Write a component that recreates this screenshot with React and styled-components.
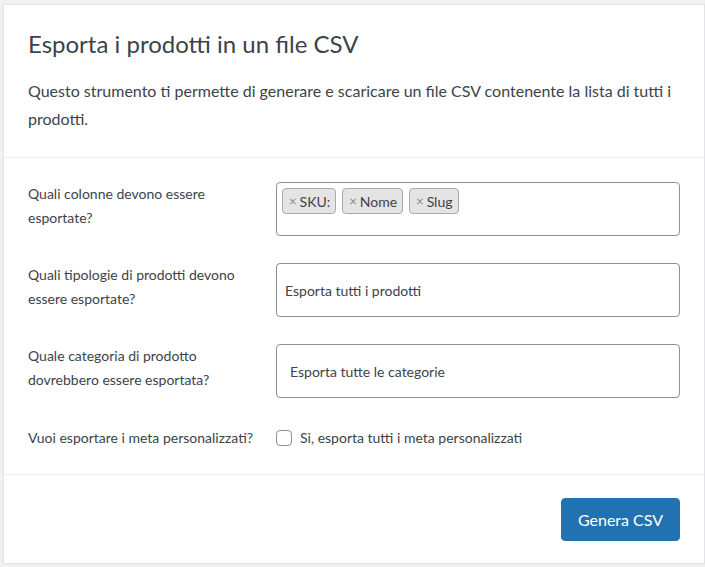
import React from "react";
import styled, { createGlobalStyle } from "styled-components";

const Global = createGlobalStyle`
  html, body { margin: 0; padding: 0; background: #f0f0f1; }
  body { font-family: Lato, "Liberation Sans", sans-serif; color: #3c434a; }
  * { box-sizing: border-box; }
`;

const Page = styled.div`
  padding: 5px 1px 4px 4px;
`;

const Card = styled.div`
  background: #fff;
  width: 700px;
  height: 558px;
  box-shadow: 0 0 0 1px #e4e4e6, 0 1px 2px rgba(0,0,0,0.05);
  display: flex;
  flex-direction: column;
`;

const Header = styled.div`
  padding: 23px 24px 24px 24px;
  border-bottom: 1px solid #ececec;
`;

const Title = styled.h2`
  margin: 0;
  font-size: 24px;
  line-height: 31px;
  font-weight: 400;
  color: #3c434a;
`;

const Intro = styled.p`
  margin: 18px 0 0;
  font-size: 16px;
  line-height: 28px;
  color: #3c434a;
`;

const Form = styled.div`
  padding: 24px 24px 23px;
  display: flex;
  flex-direction: column;
  gap: 27px;
  border-bottom: 1px solid #ececec;
`;

const Row = styled.div`
  display: grid;
  grid-template-columns: 240px 1fr;
  gap: 8px;
  align-items: ${(p) => (p.$center ? "center" : "start")};
`;

const Label = styled.label`
  font-size: 14px;
  line-height: 24px;
  color: #3c434a;
  white-space: nowrap;
`;

const Field = styled.div`
  height: 54px;
  border: 1px solid #8c8f94;
  border-radius: 4px;
  background: #fff;
  display: flex;
  align-items: ${(p) => (p.$tags ? "flex-start" : "center")};
  padding: ${(p) => (p.$tags ? "5px 5px" : `0 ${p.$pad || 8}px`)};
  gap: 6px;
  font-size: 14px;
  color: #3c434a;
`;

const Tag = styled.span`
  display: inline-flex;
  align-items: center;
  height: 26px;
  padding: 0 5px 0 6px;
  background: #e4e4e4;
  border: 1px solid #aaa;
  border-radius: 4px;
  font-size: 14px;
  color: #3c434a;
  gap: 3px;
`;

const TagX = styled.span`
  font-size: 13px;
  color: #888;
  line-height: 1;
`;

const CheckWrap = styled.label`
  display: flex;
  align-items: center;
  gap: 8px;
  font-size: 14px;
  line-height: 26px;
  color: #3c434a;
`;

const Box = styled.span`
  width: 16px;
  height: 16px;
  border: 1px solid #8c8f94;
  border-radius: 4px;
  background: #fff;
  display: inline-block;
`;

const Footer = styled.div`
  padding: 23px 24px;
  display: flex;
  justify-content: flex-end;
`;

const Button = styled.button`
  width: 119px;
  height: 43px;
  background: #2271b1;
  border: 1px solid #2271b1;
  border-radius: 4px;
  color: #fff;
  font-family: inherit;
  font-size: 16px;
  cursor: pointer;
`;

export default function App() {
  return (
    <>
      <Global />
      <Page>
        <Card>
          <Header>
            <Title>Esporta i prodotti in un file CSV</Title>
            <Intro>
              Questo strumento ti permette di generare e scaricare un file CSV contenente la lista di tutti i
              <br />
              prodotti.
            </Intro>
          </Header>
          <Form>
            <Row>
              <Label>
                Quali colonne devono essere
                <br />
                esportate?
              </Label>
              <Field $tags>
                <Tag><TagX>×</TagX>SKU:</Tag>
                <Tag><TagX>×</TagX>Nome</Tag>
                <Tag><TagX>×</TagX>Slug</Tag>
              </Field>
            </Row>
            <Row>
              <Label>
                Quali tipologie di prodotti devono
                <br />
                essere esportate?
              </Label>
              <Field $pad={8}>Esporta tutti i prodotti</Field>
            </Row>
            <Row>
              <Label>
                Quale categoria di prodotto
                <br />
                dovrebbero essere esportata?
              </Label>
              <Field $pad={13}>Esporta tutte le categorie</Field>
            </Row>
            <Row $center>
              <Label>Vuoi esportare i meta personalizzati?</Label>
              <CheckWrap>
                <Box />
                Si, esporta tutti i meta personalizzati
              </CheckWrap>
            </Row>
          </Form>
          <Footer>
            <Button>Genera CSV</Button>
          </Footer>
        </Card>
      </Page>
    </>
  );
}
